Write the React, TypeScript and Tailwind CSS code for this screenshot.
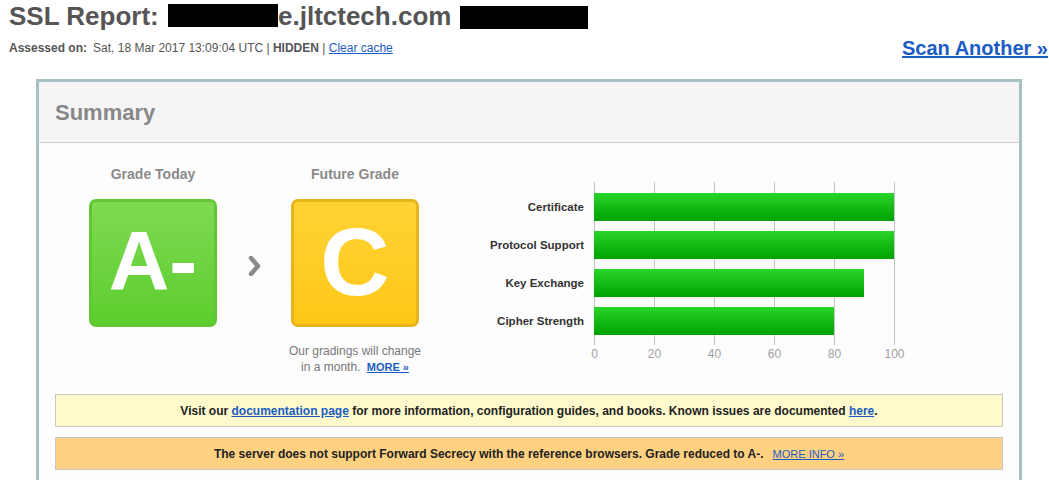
import React from "react";

const font = { fontFamily: '"Liberation Sans", Arial, sans-serif' };

function Chart() {
  const bars = [
    { label: "Certificate", v: 100 },
    { label: "Protocol Support", v: 100 },
    { label: "Key Exchange", v: 90 },
    { label: "Cipher Strength", v: 80 },
  ];
  const x0 = 114;
  const grid = [0, 20, 40, 60, 80, 100];
  return (
    <svg width="430" height="185" viewBox="0 0 430 185" className="block">
      <defs>
        <linearGradient id="barg" x1="0" y1="0" x2="0" y2="1">
          <stop offset="0" stopColor="#2ad42a" />
          <stop offset="1" stopColor="#00a200" />
        </linearGradient>
      </defs>
      {grid.map((g) => (
        <line key={g} x1={x0 + g * 3 + 0.5} x2={x0 + g * 3 + 0.5} y1={3} y2={166} stroke="#c4c4c4" strokeWidth="1" />
      ))}
      {bars.map((b, i) => {
        const y = 14 + i * 38;
        return (
          <g key={b.label}>
            <rect x={x0} y={y} width={b.v * 3} height={28} fill="url(#barg)" />
            <text x={104} y={y + 18} textAnchor="end" fontFamily='"Liberation Sans", Arial, sans-serif' fontSize="11.5" fontWeight="bold" fill="#333">
              {b.label}
            </text>
          </g>
        );
      })}
      {grid.map((g) => (
        <text key={"t" + g} x={x0 + g * 3 + 0.5} y={179} textAnchor="middle" fontFamily='"Liberation Sans", Arial, sans-serif' fontSize="12" fill="#a0a0a0">
          {g}
        </text>
      ))}
    </svg>
  );
}

export default function App() {
  return (
    <div className="bg-white w-[1049px] h-[480px] overflow-hidden text-[#555]" style={font}>
      <div className="pl-[9px] pt-[1px]">
        <h1 className="text-[26px] leading-[30px] font-bold text-[#555] whitespace-nowrap">
          SSL Report:{" "}
          <span className="inline-block align-top mt-[3px] ml-[2px] w-[110px] h-[23px] bg-black"></span>
          e.jltctech.com{" "}
          <span className="inline-block align-top mt-[5px] ml-[1px] w-[128px] h-[23px] bg-black"></span>
        </h1>
      </div>
      <div className="flex items-center justify-between pl-[9px] pr-[1px] mt-[5px] h-[24px]">
        <div className="text-[12px] leading-[14px] text-[#555]">
          <span className="font-bold">Assessed on:</span>
          <span className="ml-[6px]">Sat, 18 Mar 2017 13:09:04 UTC</span>
          <span> | </span>
          <span className="font-bold">HIDDEN</span>
          <span> | </span>
          <a className="text-[#1a5cc4] underline" href="#">Clear cache</a>
        </div>
        <a href="#" className="text-[20px] leading-[24px] font-bold text-[#1a5cc4] underline">
          Scan Another »
        </a>
      </div>
      <div className="ml-[36px] mt-[19px] w-[986px] h-[420px] border-[3px] border-[#a8c1c5] border-b-0 bg-[#fdfdfd]">
        <div className="h-[61px] bg-[#f5f5f5] border-b border-[#cdcdcd] pl-[16px] text-[22px] leading-[62px] font-bold text-[#888]">
          Summary
        </div>
        <div className="px-[16px]">
          <div className="flex items-start pt-[23px]">
            <div className="ml-[34px] flex items-start">
              <div className="w-[128px] flex flex-col items-center">
                <div className="text-[14px] leading-[16px] font-bold text-[#8a8a8a]">Grade Today</div>
                <div className="mt-[17px] w-[128px] h-[128px] rounded-[7px] border-[3px] border-[#63c635] bg-gradient-to-b from-[#7fda52] to-[#5ccd2c] flex items-center justify-center">
                  <span className="text-white font-bold text-[84px] leading-none mt-[-4px]">A-</span>
                </div>
              </div>
              <div className="w-[74px] h-[161px] flex items-end justify-center pb-[51px] pl-[2px]">
                <svg width="14" height="20" viewBox="0 0 14 20">
                  <polyline points="3,2 10,10 3,18" fill="none" stroke="#8a8a8a" strokeWidth="4.5" strokeLinecap="round" strokeLinejoin="round" />
                </svg>
              </div>
              <div className="w-[128px] flex flex-col items-center">
                <div className="text-[14px] leading-[16px] font-bold text-[#8a8a8a]">Future Grade</div>
                <div className="mt-[17px] w-[128px] h-[128px] rounded-[7px] border-[3px] border-[#e8b41c] bg-gradient-to-b from-[#ffd233] to-[#ffc815] flex items-center justify-center">
                  <span className="text-white font-bold text-[96px] leading-none mt-[-2px]">C</span>
                </div>
                <div className="mt-[16px] w-[200px] text-center text-[12px] leading-[16px] text-[#777]">
                  Our gradings will change
                  <br />
                  in a month.{" "}
                  <a href="#" className="ml-[3px] text-[11px] font-bold text-[#1a5cc4] underline">MORE »</a>
                </div>
              </div>
            </div>
            <div className="ml-[61px] mt-[13px]">
              <Chart />
            </div>
          </div>
          <div className="mt-[19px] h-[33px] border border-[#c8c8c8] bg-[#fffacc] flex items-center justify-center text-[12px] font-bold text-[#222]">
            <span>
              Visit our{" "}
              <a href="#" className="text-[#1a5cc4] underline">documentation page</a>{" "}
              for more information, configuration guides, and books. Known issues are documented{" "}
              <a href="#" className="text-[#1a5cc4] underline">here</a>.
            </span>
          </div>
          <div className="mt-[10px] h-[33px] border border-[#c8c8c8] bg-[#ffd181] flex items-center justify-center text-[12px] font-bold text-[#222]">
            <span>
              The server does not support Forward Secrecy with the reference browsers. Grade reduced to A-.
              <a href="#" className="ml-[9px] text-[11px] font-normal text-[#1a5cc4] underline">MORE INFO »</a>
            </span>
          </div>
        </div>
      </div>
    </div>
  );
}
